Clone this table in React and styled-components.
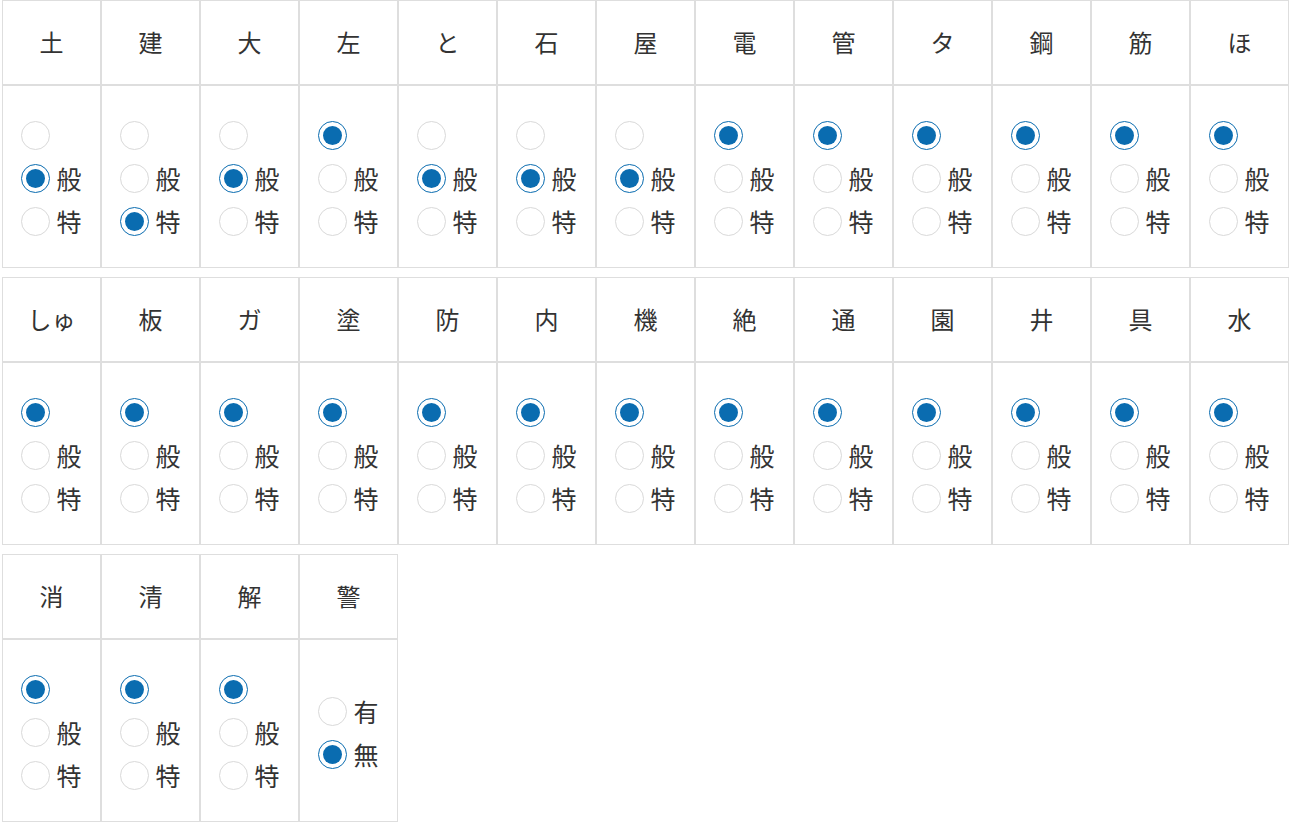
import React from "react";
import styled, { createGlobalStyle } from "styled-components";

const GlobalStyle = createGlobalStyle`
  body {
    margin: 0;
    background: #fff;
    font-family: "Noto Sans CJK JP", "Noto Sans", sans-serif;
    color: #333;
  }
`;

const Page = styled.div`
  padding: 0 2px;
  display: flex;
  flex-direction: column;
  gap: 9px;
`;

const Table = styled.div`
  display: grid;
  grid-template-columns: repeat(${(p) => p.$cols}, 99px);
`;

const Column = styled.div`
  display: flex;
  flex-direction: column;
`;

const HeadCell = styled.div`
  box-sizing: border-box;
  height: 85px;
  border: 1px solid #dedede;
  padding-bottom: 3px;
  display: flex;
  align-items: center;
  justify-content: center;
  font-size: 24px;
  color: #333;
`;

const BodyCell = styled.div`
  box-sizing: border-box;
  height: 183px;
  border: 1px solid #dedede;
  padding-top: 4px;
  display: flex;
  align-items: center;
  justify-content: center;
`;

const Group = styled.div`
  display: flex;
  flex-direction: column;
  align-items: flex-start;
  width: 62px;
`;

const Option = styled.label`
  display: flex;
  align-items: center;
  gap: 7px;
  height: 43px;
  font-size: 25px;
  line-height: 1;
  color: #333;
`;

const Circle = styled.span`
  box-sizing: border-box;
  width: 29px;
  height: 29px;
  border-radius: 50%;
  border: 1px solid ${(p) => (p.$on ? "#0a6cb0" : "#d9d9d9")};
  background: #fff;
  display: flex;
  align-items: center;
  justify-content: center;
  flex-shrink: 0;

  &::after {
    content: "";
    width: 19px;
    height: 19px;
    border-radius: 50%;
    background: ${(p) => (p.$on ? "#0a6cb0" : "transparent")};
  }
`;

const Radio = ({ on, label }) => (
  <Option>
    <Circle $on={on} />
    {label && <span>{label}</span>}
  </Option>
);

// value: index of selected option
const tables = [
  [
    ["土", 1], ["建", 2], ["大", 1], ["左", 0], ["と", 1], ["石", 1], ["屋", 1],
    ["電", 0], ["管", 0], ["タ", 0], ["鋼", 0], ["筋", 0], ["ほ", 0],
  ],
  [
    ["しゅ", 0], ["板", 0], ["ガ", 0], ["塗", 0], ["防", 0], ["内", 0], ["機", 0],
    ["絶", 0], ["通", 0], ["園", 0], ["井", 0], ["具", 0], ["水", 0],
  ],
  [["消", 0], ["清", 0], ["解", 0], ["警", 1, ["有", "無"]]],
];

const App = () => (
  <>
    <GlobalStyle />
    <Page>
      {tables.map((cols, t) => (
        <Table key={t} $cols={cols.length}>
          {cols.map(([name, value, opts]) => {
            const labels = opts || ["", "般", "特"];
            return (
              <Column key={name}>
                <HeadCell>{name}</HeadCell>
                <BodyCell>
                  <Group>
                    {labels.map((l, i) => (
                      <Radio key={i} label={l} on={i === value} />
                    ))}
                  </Group>
                </BodyCell>
              </Column>
            );
          })}
        </Table>
      ))}
    </Page>
  </>
);

export default App;
